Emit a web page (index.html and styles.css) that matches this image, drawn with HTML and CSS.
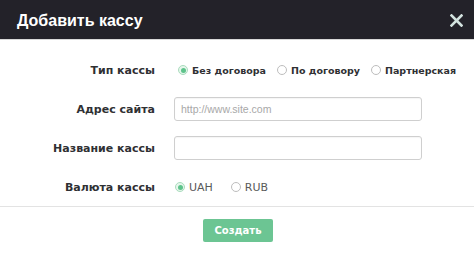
FILE: index.html
```html
<!DOCTYPE html>
<html lang="ru">
<head>
<meta charset="utf-8">
<link rel="stylesheet" href="styles.css">
</head>
<body>
<div class="modal">
  <div class="modal-header">
    <h1 class="modal-title">Добавить кассу</h1>
    <button class="close" type="button" aria-label="Закрыть">
      <svg width="13" height="13" viewBox="0 0 13 13"><path d="M1.5 1.5 L11.5 11.5 M11.5 1.5 L1.5 11.5" stroke="#d3e3df" stroke-width="2.6" stroke-linecap="square"/></svg>
    </button>
  </div>
  <form class="modal-body">
    <div class="row">
      <div class="label">Тип кассы</div>
      <div class="radios radios-type">
        <label class="radio"><span class="dot checked"></span><span class="rtext bold">Без договора</span></label>
        <label class="radio"><span class="dot"></span><span class="rtext bold">По договору</span></label>
        <label class="radio"><span class="dot"></span><span class="rtext bold">Партнерская</span></label>
      </div>
    </div>
    <div class="row">
      <div class="label">Адрес сайта</div>
      <input class="input" type="text" placeholder="http://www.site.com">
    </div>
    <div class="row">
      <div class="label">Название кассы</div>
      <input class="input" type="text">
    </div>
    <div class="row">
      <div class="label">Валюта кассы</div>
      <div class="radios radios-cur">
        <label class="radio"><span class="dot checked"></span><span class="rtext">UAH</span></label>
        <label class="radio"><span class="dot"></span><span class="rtext">RUB</span></label>
      </div>
    </div>
  </form>
  <div class="modal-footer">
    <button class="btn" type="button">Создать</button>
  </div>
</div>
</body>
</html>
```
FILE: styles.css
```css
* { box-sizing: border-box; }
html, body { margin: 0; padding: 0; background: #fff; }
body { width: 474px; height: 254px; overflow: hidden; font-family: "DejaVu Sans", sans-serif; }

.modal { display: flex; flex-direction: column; height: 254px; }

.modal-header {
  height: 40px;
  background: #232229;
  display: flex;
  align-items: center;
  justify-content: space-between;
  padding: 0 11px 0 17px;
  border-bottom: 1px solid #d8d8d8;
}
.modal-title {
  margin: 0;
  color: #fff;
  font-family: "Liberation Sans", Arial, sans-serif;
  font-weight: bold;
  font-size: 16px;
  line-height: 20px;
  padding-top: 3px;
}
.close {
  background: none; border: 0; padding: 0; margin: 2px 0 0 0;
  width: 13px; height: 13px; display: block;
}
.close svg { display: block; }

.modal-body {
  margin: 0;
  padding: 18px 0 7px 0;
  display: flex;
  flex-direction: column;
  gap: 15px;
  border-bottom: 1px solid #e3e3e3;
}
.row {
  display: grid;
  grid-template-columns: 155px 248px;
  column-gap: 19px;
  align-items: center;
  height: 24px;
}
.label {
  text-align: right;
  font-weight: bold;
  font-size: 11px;
  color: #2f3033;
}
.input {
  width: 248px;
  height: 24px;
  border: 1px solid #cfcfcf;
  border-radius: 3px;
  padding: 0 6px;
  font-family: "Liberation Sans", Arial, sans-serif;
  font-size: 10.5px;
  color: #333;
  outline: none;
  box-shadow: inset 0 1px 1px rgba(0,0,0,0.04);
}
.input::placeholder { color: #a8a8a8; }

.radios { display: flex; align-items: center; white-space: nowrap; }
.radios-type { gap: 11px; padding-left: 4px; }
.radios-cur { gap: 18px; padding-left: 1px; }
.radio { display: flex; align-items: center; gap: 4px; }
.dot {
  width: 10px; height: 10px; border-radius: 50%;
  border: 1px solid #bdbdbd;
  background: #fff;
  position: relative;
  flex: none;
}
.dot.checked { border-color: #a9dcbd; background: #e6f6ec; }
.dot.checked::after {
  content: "";
  position: absolute;
  left: 1.5px; top: 1.5px;
  width: 5px; height: 5px; border-radius: 50%;
  background: #5ec38b;
}
.rtext { font-size: 11px; color: #5a5a5a; }
.rtext.bold { font-weight: bold; font-size: 9.5px; color: #2f3033; }

.modal-footer {
  flex: 1;
  display: flex;
  justify-content: center;
  align-items: flex-start;
  padding-top: 12px;
  padding-left: 2px;
}
.btn {
  width: 70px; height: 23px;
  background: #6cc593;
  border: 0;
  border-radius: 2px;
  color: #fff;
  font-family: "DejaVu Sans", sans-serif;
  font-weight: bold;
  font-size: 10px;
  padding: 0;
}
```
